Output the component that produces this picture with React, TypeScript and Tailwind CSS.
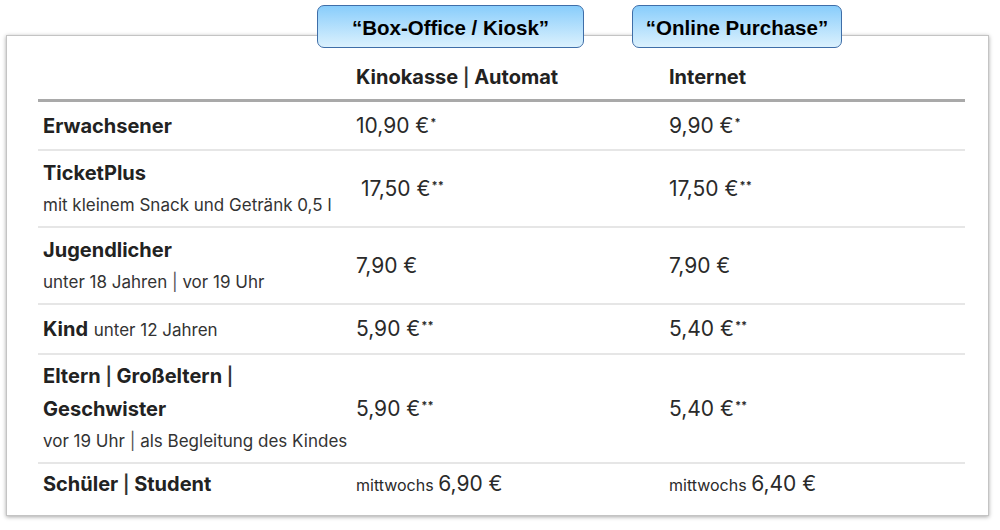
type Row = {
  label: React.ReactNode;
  kasse: React.ReactNode;
  online: React.ReactNode;
  h: string;
};

function Pipe() {
  return <span className="font-semibold text-[#333] text-[18px]">|</span>;
}

function Price({ value, star }: { value: string; star?: string }) {
  return (
    <span className="text-[21px] text-[#2a2a2a] whitespace-nowrap">
      {value}
      {star && (
        <sup className="text-[11px] font-bold relative -top-[7px] ml-[1px]">{star}</sup>
      )}
    </span>
  );
}

function Wed({ value }: { value: string }) {
  return (
    <span className="text-[#2a2a2a] whitespace-nowrap">
      <span className="text-[16px]">mittwochs</span>{" "}
      <span className="text-[21px]">{value}</span>
    </span>
  );
}

const rows: Row[] = [
  {
    label: <div className="font-bold text-[20px]">Erwachsener</div>,
    kasse: <Price value="10,90 €" star="*" />,
    online: <Price value="9,90 €" star="*" />,
    h: "h-[47px]",
  },
  {
    label: (
      <>
        <div className="font-bold text-[20px] leading-[32px]">TicketPlus</div>
        <div className="text-[17px] leading-[32px] text-[#333]">
          mit kleinem Snack und Getränk 0,5 l
        </div>
      </>
    ),
    kasse: (
      <span className="ml-[5px]">
        <Price value="17,50 €" star="**" />
      </span>
    ),
    online: <Price value="17,50 €" star="**" />,
    h: "h-[75px]",
  },
  {
    label: (
      <>
        <div className="font-bold text-[20px] leading-[32px]">Jugendlicher</div>
        <div className="text-[17px] leading-[32px] text-[#333]">
          unter 18 Jahren <span className="text-[#555]">|</span> vor 19 Uhr
        </div>
      </>
    ),
    kasse: <Price value="7,90 €" />,
    online: <Price value="7,90 €" />,
    h: "h-[75px]",
  },
  {
    label: (
      <div className="text-[20px]">
        <span className="font-bold">Kind</span>{" "}
        <span className="text-[17px] text-[#333]">unter 12 Jahren</span>
      </div>
    ),
    kasse: <Price value="5,90 €" star="**" />,
    online: <Price value="5,40 €" star="**" />,
    h: "h-[48px]",
  },
  {
    label: (
      <>
        <div className="font-bold text-[20px] leading-[32px] whitespace-nowrap">
          Eltern <Pipe /> Großeltern <Pipe />
        </div>
        <div className="font-bold text-[20px] leading-[32px]">Geschwister</div>
        <div className="text-[17px] leading-[32px] text-[#333] whitespace-nowrap">
          vor 19 Uhr <span className="text-[#555]">|</span> als Begleitung des Kindes
        </div>
      </>
    ),
    kasse: <Price value="5,90 €" star="**" />,
    online: <Price value="5,40 €" star="**" />,
    h: "h-[107px]",
  },
  {
    label: (
      <div className="font-bold text-[20px]">
        Schüler <Pipe /> Student
      </div>
    ),
    kasse: <Wed value="6,90 €" />,
    online: <Wed value="6,40 €" />,
    h: "h-[40px]",
  },
];

function Badge({ text, className }: { text: string; className: string }) {
  return (
    <div
      className={`absolute top-[-31px] h-[43px] pt-[3px] rounded-[7px] border border-[#3f6ea8] bg-gradient-to-b from-[#88cdfb] to-[#dbf1fd] flex items-center justify-center font-bold text-[20.5px] text-black ${className}`}
      style={{ fontFamily: '"Liberation Sans", Arial, sans-serif' }}
    >
      {text}
    </div>
  );
}

export default function App() {
  return (
    <div
      className="w-[1000px] h-[530px] bg-white pt-[35px] pl-[6px] text-[#222]"
      style={{ fontFamily: "Inter, sans-serif" }}
    >
      <div className="relative w-[983px] border border-[#c4c4c4] bg-white pl-[31px] pb-[11px] shadow-[0_1px_4px_rgba(0,0,0,0.35)]">
        <Badge text="“Box-Office / Kiosk”" className="left-[310px] w-[267px]" />
        <Badge text="“Online Purchase”" className="left-[625px] w-[210px]" />

        <div className="w-[927px]">
          {/* Kopfzeile */}
          <div className="grid grid-cols-[318px_313px_1fr] pt-[29px] pb-[9px] border-b-[3px] border-[#a9a9a9] font-bold text-[20px] leading-[24px]">
            <div />
            <div>
              Kinokasse <Pipe /> Automat
            </div>
            <div>Internet</div>
          </div>

          {rows.map((r, i) => (
            <div
              key={i}
              className={`grid grid-cols-[318px_313px_1fr] ${r.h} ${
                i < rows.length - 1 ? "border-b-2 border-[#e6e6e6] box-content" : ""
              }`}
            >
              <div className="pl-[5px] flex flex-col justify-center">{r.label}</div>
              <div className="flex items-center">{r.kasse}</div>
              <div className="flex items-center">{r.online}</div>
            </div>
          ))}
        </div>
      </div>
    </div>
  );
}
